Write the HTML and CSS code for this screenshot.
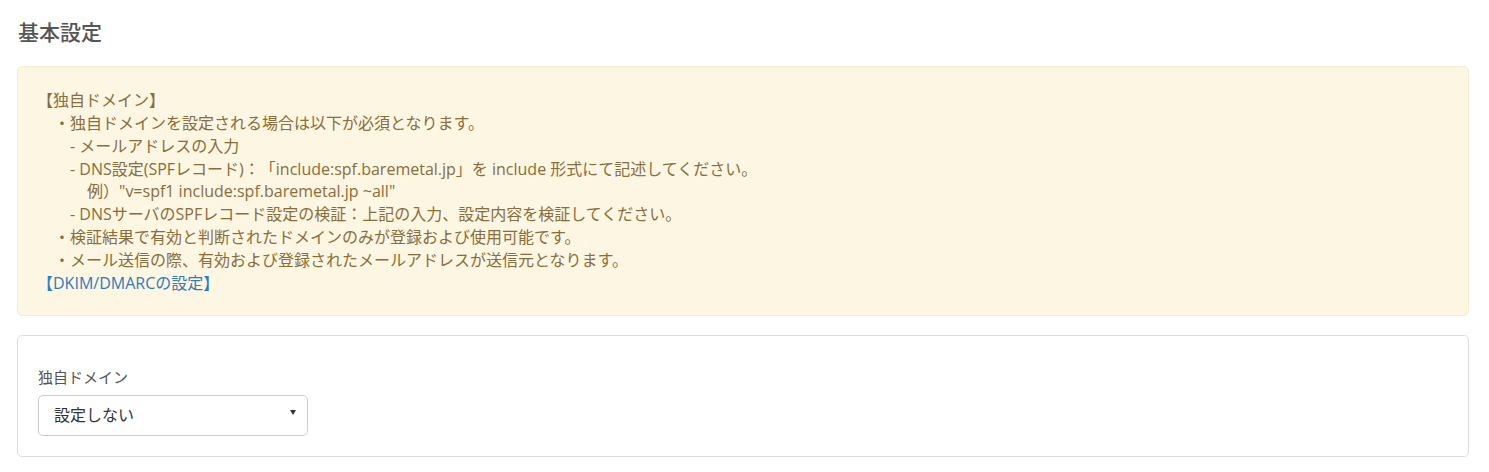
FILE: index.html
```html
<!DOCTYPE html>
<html lang="ja">
<head>
  <meta charset="UTF-8">
  <meta name="viewport" content="width=device-width, initial-scale=1.0">
  <title>基本設定</title>
  <link rel="stylesheet" href="styles.css">
</head>
<body>
  <div class="page">
    <h1 class="page-title">基本設定</h1>

    <!-- 独自ドメインの注意事項 -->
    <div class="alert-warning">
      <div>【独自ドメイン】</div>
      <div class="lv1">・独自ドメインを設定される場合は以下が必須となります。</div>
      <div class="lv2">- メールアドレスの入力</div>
      <div class="lv2">- DNS設定(SPFレコード)：「include:spf.baremetal.jp」を include 形式にて記述してください。</div>
      <div class="lv3">例）"v=spf1 include:spf.baremetal.jp ~all"</div>
      <div class="lv2">- DNSサーバのSPFレコード設定の検証：上記の入力、設定内容を検証してください。</div>
      <div class="lv1">・検証結果で有効と判断されたドメインのみが登録および使用可能です。</div>
      <div class="lv1">・メール送信の際、有効および登録されたメールアドレスが送信元となります。</div>
      <div><a href="#" class="link">【DKIM/DMARCの設定】</a></div>
    </div>

    <!-- 設定フォーム -->
    <div class="panel">
      <label for="domain" class="form-label">独自ドメイン</label>
      <div class="select-wrap">
        <select id="domain" class="form-select">
          <option>設定しない</option>
        </select>
      </div>
    </div>
  </div>
</body>
</html>
```

FILE: styles.css
```css
body {
  margin: 0;
  font-family: "Open Sans", "Noto Sans CJK JP", sans-serif;
  font-size: 16px;
  background-color: white;
  text-spacing-trim: space-all;
}

.page {
  padding: 10px 20px 0 17px;
}

.page-title {
  margin: 0 0 12px 1px;
  font-size: 21px;
  line-height: 44px;
  font-weight: 500;
  color: #555;
}

.alert-warning {
  background-color: #fdf6e2;
  border: 1px solid #faebcc;
  border-radius: 5px;
  padding: 22px 19px 20px 19px;
  color: #8a6d3b;
  line-height: 1.42857;
  margin-bottom: 19px;
}

.lv1 {
  padding-left: 17px;
}

.lv2 {
  padding-left: 33px;
}

.lv3 {
  padding-left: 50px;
}

.link {
  color: #2f7bbf;
  text-decoration: none;
}

.panel {
  border: 1px solid #ddd;
  border-radius: 5px;
  padding: 31px 20px 20px 20px;
}

.form-label {
  display: block;
  font-family: "Liberation Sans", "Noto Sans CJK JP", sans-serif;
  font-size: 15px;
  line-height: 22px;
  color: #555;
  margin-bottom: 6px;
}

.select-wrap {
  position: relative;
  width: 270px;
}

.select-wrap::after {
  content: "";
  position: absolute;
  right: 12px;
  top: 15px;
  border-left: 3px solid transparent;
  border-right: 3px solid transparent;
  border-top: 5px solid #333;
}

.form-select {
  appearance: none;
  -webkit-appearance: none;
  width: 270px;
  height: 41px;
  padding: 0 30px 0 15px;
  border: 1px solid #ccc;
  border-radius: 5px;
  background-color: white;
  font-family: "Liberation Sans", "Noto Sans CJK JP", sans-serif;
  font-size: 16px;
  color: #333;
}
```
